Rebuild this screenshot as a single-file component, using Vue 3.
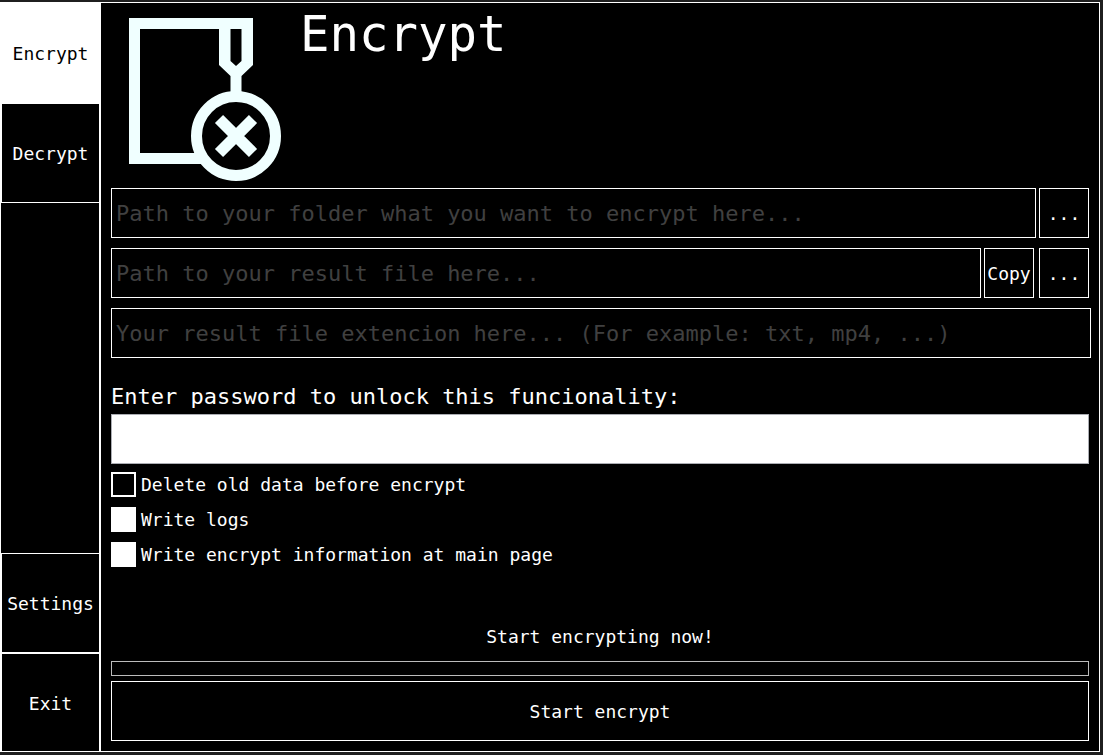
<script setup>
import { ref } from 'vue'

const page = ref('Encrypt')
const source = ref('')
const result = ref('')
const extension = ref('')
const password = ref('')
const progress = ref(0)

const topPages = ['Encrypt', 'Decrypt']
const bottomPages = ['Settings', 'Exit']

const options = ref([
  { id: 'delete-old', label: 'Delete old data before encrypt', on: false },
  { id: 'write-logs', label: 'Write logs', on: true },
  { id: 'write-info', label: 'Write encrypt information at main page', on: true },
])
</script>

<template>
  <div class="desktop">
    <div class="window">
      <nav class="sidebar">
        <div class="group">
          <button
            v-for="name in topPages"
            :key="name"
            type="button"
            class="nav-button"
            :class="{ active: page === name }"
            @click="page = name"
          >{{ name }}</button>
        </div>
        <div class="group">
          <button
            v-for="name in bottomPages"
            :key="name"
            type="button"
            class="nav-button"
            :class="{ active: page === name }"
            @click="page = name"
          >{{ name }}</button>
        </div>
      </nav>

      <main class="content">
        <header class="header">
          <svg class="logo" viewBox="0 0 180 180" aria-hidden="true">
            <path d="M92 155.500H23.500V20.500H136" fill="none" stroke="#f0ffff" stroke-width="11" />
            <path
              d="M108 15H142V62L130.500 73V94H119.500V73L108 62ZM119.500 26V58L125 63L130.500 58V26Z"
              fill="#f0ffff"
              fill-rule="evenodd"
            />
            <circle cx="125" cy="133" r="39.500" fill="none" stroke="#f0ffff" stroke-width="11" />
            <path d="M108 116L142 150M142 116L108 150" stroke="#f0ffff" stroke-width="11.500" />
          </svg>
          <h1 class="title">Encrypt</h1>
        </header>

        <div class="fields">
          <div class="row">
            <input v-model="source" class="field" type="text" aria-label="Source folder" placeholder="Path to your folder what you want to encrypt here..." />
            <button type="button" class="square">...</button>
          </div>
          <div class="row">
            <input v-model="result" class="field" type="text" aria-label="Result file" placeholder="Path to your result file here..." />
            <div class="actions">
              <button type="button" class="square">Copy</button>
              <button type="button" class="square">...</button>
            </div>
          </div>
          <div class="row wide">
            <input v-model="extension" class="field" type="text" aria-label="Result file extension" placeholder="Your result file extencion here... (For example: txt, mp4, ...)" />
          </div>
        </div>

        <label class="password-label" for="password">Enter password to unlock this funcionality:</label>
        <input id="password" v-model="password" class="password" type="password" />

        <div class="options">
          <label v-for="option in options" :key="option.id" class="option" :for="option.id">
            <input :id="option.id" v-model="option.on" class="check" type="checkbox" />
            <span>{{ option.label }}</span>
          </label>
        </div>

        <footer class="footer">
          <label class="status" for="progress">Start encrypting now!</label>
          <progress id="progress" class="progress" :value="progress" max="100"></progress>
          <button type="button" class="start">Start encrypt</button>
        </footer>
      </main>
    </div>
  </div>
</template>

<style>
body {
  margin: 0;
  background: #1f1f1f;
}
</style>

<style scoped>
.desktop,
.desktop * {
  box-sizing: border-box;
}

.desktop {
  min-height: 100vh;
  padding: 2px 3px 3px 0;
  display: flex;
  background: #1f1f1f;
  color: #fff;
  font-family: "DejaVu Sans Mono", monospace;
  font-size: 18px;
  line-height: 24px;
}

.window {
  flex: 1;
  min-width: 0;
  display: flex;
  border: 1px solid #fff;
  background: #000;
}

button,
input {
  margin: 0;
  padding: 0;
  border-radius: 0;
  font: inherit;
}

button {
  padding-top: 2px;
  border: 1px solid #fff;
  background: #000;
  color: #fff;
  cursor: pointer;
}

.sidebar {
  flex: none;
  width: 100px;
  display: flex;
  flex-direction: column;
  justify-content: space-between;
  border-right: 2px solid #fff;
}

.group {
  display: flex;
  flex-direction: column;
}

.nav-button {
  height: 100px;
  border-right: 0;
}

.nav-button.active {
  background: #fff;
  color: #000;
}

.group:last-child .nav-button:last-child {
  height: 98px;
  border-bottom: 0;
}

.content {
  flex: 1;
  min-width: 0;
  padding: 0 10px 10px;
  display: flex;
  flex-direction: column;
}

.header {
  display: flex;
  gap: 9px;
  height: 185px;
}

.logo {
  flex: none;
  width: 180px;
  height: 180px;
}

.title {
  margin: 0;
  padding-top: 3px;
  font-size: 49px;
  line-height: 58px;
  font-weight: 400;
}

.fields {
  display: flex;
  flex-direction: column;
  gap: 10px;
}

.row {
  display: flex;
  gap: 3px;
}

.row.wide {
  margin-right: -2px;
}

.actions {
  display: flex;
  gap: 5px;
}

.field {
  flex: 1;
  min-width: 0;
  height: 50px;
  padding: 0 4px;
  border: 1px solid #fff;
  background: #000;
  color: #fff;
  font-size: 22px;
}

.field::placeholder {
  color: #404040;
  opacity: 1;
}

.square {
  flex: none;
  width: 50px;
  height: 50px;
}

.password-label {
  margin-top: 24px;
  padding-bottom: 2px;
  font-size: 22px;
  line-height: 30px;
}

.password {
  height: 50px;
  padding: 0 4px;
  border: 1px solid #abadb3;
  background: #fff;
  color: #000;
  font-size: 22px;
}

.options {
  margin-top: 8px;
  display: flex;
  flex-direction: column;
  align-items: flex-start;
  gap: 10px;
}

.option {
  display: flex;
  align-items: center;
  gap: 5px;
}

.check {
  appearance: none;
  width: 25px;
  height: 25px;
  border: 2px solid #fff;
  background: #000;
}

.check:checked {
  background: #fff;
}

.footer {
  margin-top: auto;
  display: flex;
  flex-direction: column;
}

.status {
  margin-bottom: 12px;
  text-align: center;
}

.progress {
  appearance: none;
  width: 100%;
  height: 15px;
  margin-bottom: 5px;
  border: 1px solid #bcbcbc;
  background: #000;
}

.progress::-webkit-progress-bar {
  background: #000;
}

.progress::-webkit-progress-value {
  background: #fff;
}

.start {
  height: 60px;
}
</style>
